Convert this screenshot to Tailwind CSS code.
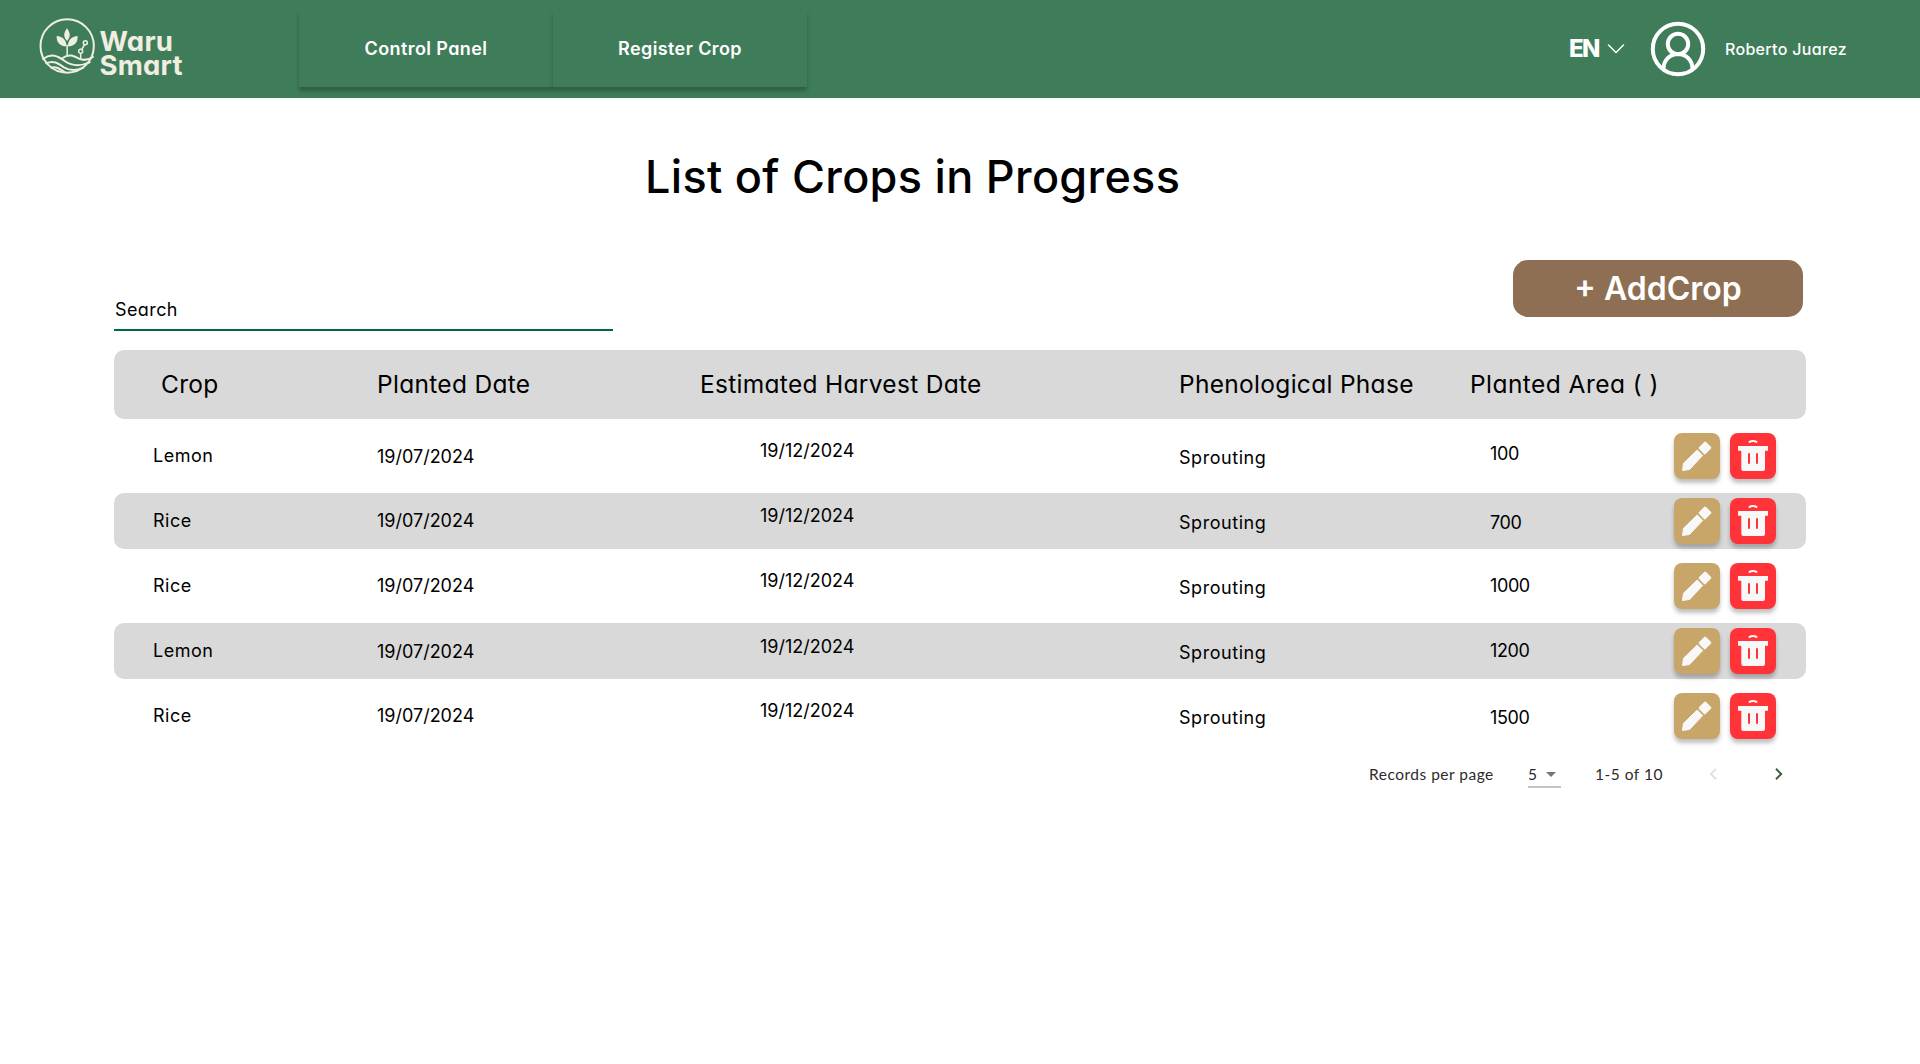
<!DOCTYPE html>
<html lang="en">
<head>
<meta charset="utf-8">
<title>Waru Smart</title>
<script src="https://cdn.jsdelivr.net/npm/@tailwindcss/browser@4"></script>
</head>
<body class="min-h-screen overflow-hidden bg-white font-['Inter',sans-serif] text-black [font-feature-settings:'cv11']">

<header class="flex h-[98px] items-start bg-[#3F7D5A] text-white">
  <a class="flex w-[299px] items-start pt-[18px] pl-[38.5px] text-[#EFEEE0]">
    <svg class="size-14 shrink-0" viewBox="55 54 168 168" fill="none" stroke="currentColor" stroke-width="6" stroke-linecap="round">
      <circle cx="139.500" cy="138" r="80"/>
      <g fill="currentColor" stroke="none">
        <path d="M139 85C127 101 129 112 139 123C149 112 151 101 139 85Z"/>
        <path d="M108 108C107 128 119 139 137 139C138 121 126 109 108 108Z"/>
        <path d="M171 108C172 128 160 139 142 139C141 121 153 109 171 108Z"/>
      </g>
      <path d="M139.500 136V166" stroke-width="4.500"/>
      <g stroke-width="4.500"><circle cx="194" cy="128" r="6"/><circle cx="180" cy="154" r="6"/><path d="M191 135L184 147M180 161V173"/></g>
      <path d="M67 177C92 158 112 168 132 183C155 199 180 199 207 187"/>
      <path d="M126 174C145 160 160 168 175 176C190 183 203 180 217 171"/>
      <path d="M77 190C98 180 112 189 130 202C148 213 168 212 188 203"/>
      <path d="M92 203C105 198 116 206 132 216"/>
    </svg>
    <span class="ml-[5px] flex flex-col pt-[11px] text-[27.5px] leading-6 font-bold tracking-[0.2px]"><span>Waru</span><span>Smart</span></span>
  </a>
  <nav class="flex pt-2.5 text-lg font-semibold tracking-[0.4px]">
    <a class="flex h-[77px] w-[254px] items-center justify-center bg-[#3F7D5A] shadow-[0_4px_4px_rgba(0,0,0,0.25)]">Control Panel</a>
    <a class="flex h-[77px] w-[254px] items-center justify-center bg-[#3F7D5A] shadow-[0_4px_4px_rgba(0,0,0,0.25)]">Register Crop</a>
  </nav>
  <div class="ml-auto flex h-[98px] items-center pr-[73px]">
    <span class="text-2xl font-extrabold tracking-[-1.5px]">EN</span>
    <svg class="ml-[8px] h-[10px] w-[18px]" viewBox="0 0 18 10" fill="none" stroke="currentColor" stroke-width="1.500" stroke-linecap="round" stroke-linejoin="round"><path d="M1.500 1L9 8.500L16.500 1"/></svg>
    <svg class="ml-[25px] size-14" viewBox="-28 -28 56 56" fill="none" stroke="currentColor" stroke-width="4"><circle r="25.200"/><circle cy="-5" r="10.200"/><path d="M-14.500 20C-14.500 11 -8 5 0 5S14.500 11 14.500 20"/></svg>
    <span class="ml-[19px] font-medium tracking-[0.33px]">Roberto Juarez</span>
  </div>
</header>

<main class="px-[114px]">
  <h1 class="pt-[47px] pl-[531px] text-[45px] leading-[64px] font-medium tracking-[0.3px] whitespace-nowrap">List of Crops in Progress</h1>

  <div class="flex h-[141px] items-start justify-between pt-[51px] pr-[3px]">
    <label class="mt-[38px] flex h-[33px] w-[499px] items-start border-b-2 border-[#006747] pl-px text-lg leading-6 tracking-[0.4px]">Search</label>
    <button class="h-[57px] w-[290px] rounded-[15px] bg-[#8E6F53] pb-px text-[32px] leading-[55px] font-semibold text-white">+ AddCrop</button>
  </div>

  <div class="grid h-[69px] grid-cols-[216px_323px_479px_291px_1fr] items-center rounded-[10px] bg-[#D9D9D9] pl-[47px] text-[24.5px] tracking-[0.3px] whitespace-nowrap">
    <span>Crop</span><span>Planted Date</span><span>Estimated Harvest Date</span><span>Phenological Phase</span><span class="tracking-[0.45px]">Planted Area ( )</span>
  </div>

  <div id="rows" class="flex flex-col gap-[9px] pt-[9px]"></div>

  <footer class="flex h-14 items-start pt-[20px] pl-[1255px] font-['Lato',sans-serif] text-[15.5px] leading-5 tracking-[0.5px] whitespace-nowrap text-[#2b2b2b]">
    <span class="w-[159px]">Records per page</span>
    <span class="flex h-6 w-[33px] items-start justify-between border-b-2 border-[#C4C4C4] pr-[5px]">5
      <svg class="mt-[8px] h-[5px] w-[10px]" viewBox="0 0 10 5" fill="#757575"><path d="M0 0H10L5 5Z"/></svg>
    </span>
    <span class="ml-[34px] w-[114px]">1-5 of 10</span>
    <svg class="mt-1 h-3 w-2" viewBox="0 0 8 12" fill="none" stroke="#DDE0DA" stroke-width="1.800"><path d="M7 0.800L1.800 6L7 11.200"/></svg>
    <svg class="mt-1 ml-[58px] h-3 w-2" viewBox="0 0 8 12" fill="none" stroke="#3D5F38" stroke-width="2"><path d="M1 0.800L6.200 6L1 11.200"/></svg>
  </footer>
</main>

<script>
  const crops = [
    { name: 'Lemon', area: '100',  padPlanted: 'pt-[17px]', padHarvest: 'pt-[11px]', padArea: 'pt-[14px]' },
    { name: 'Rice',  area: '700',  padPlanted: 'pt-[16px]', padHarvest: 'pt-[11px]', padArea: 'pt-[18px]' },
    { name: 'Rice',  area: '1000', padPlanted: 'pt-[16px]', padHarvest: 'pt-[11px]', padArea: 'pt-[16px]' },
    { name: 'Lemon', area: '1200', padPlanted: 'pt-[17px]', padHarvest: 'pt-[12px]', padArea: 'pt-[16px]' },
    { name: 'Rice',  area: '1500', padPlanted: 'pt-[16px]', padHarvest: 'pt-[11px]', padArea: 'pt-[18px]' },
  ];
  const pencil = '<svg class="size-[46px]" viewBox="0 0 46 46" fill="#F8F8F8" stroke="#F8F8F8" stroke-linejoin="round"><path stroke-width="1" d="M8.500 37.500L9.500 30.300L23.200 17L28.700 22.500L15.500 36.500Z"/><path stroke-width="3" d="M26.200 15L31 10.200L35.800 14.800L30.800 19.800Z"/></svg>';
  const trash = '<svg class="size-[46px]" viewBox="0 0 46 46" fill="#F8F8F8"><path d="M8 13H38V17.700H35V36Q35 38 33 38H13.300Q11.300 38 11.300 36V17.700H8Z"/><path fill="none" stroke="#F8F8F8" stroke-width="2" d="M18.800 9.300Q23 6.700 27.200 9.300"/><path fill="none" stroke="#FF3338" stroke-width="2" d="M19 20.300V30.700M27 20.300V30.700"/></svg>';
  document.getElementById('rows').innerHTML = crops.map((c, i) => `
    <div class="grid h-14 grid-cols-[224px_383px_419px_311px_184px] items-start rounded-[10px] pl-[39px] text-lg leading-6 ${i % 2 ? 'bg-[#D9D9D9]' : ''}">
      <span class="pt-4 tracking-[0.5px]">${c.name}</span>
      <span class="${c.padPlanted}">19/07/2024</span>
      <span class="${c.padHarvest}">19/12/2024</span>
      <span class="pt-[18px] tracking-[0.55px]">Sprouting</span>
      <span class="${c.padArea} tracking-[-0.4px]">${c.area}</span>
      <div class="col-start-6 flex gap-2.5 pt-[5px]">
        <button class="shrink-0 rounded-lg bg-[#C8A669] shadow-[0_4px_4px_rgba(0,0,0,0.25)]">${pencil}</button>
        <button class="shrink-0 rounded-lg bg-[#FF3338] shadow-[0_4px_4px_rgba(0,0,0,0.25)]">${trash}</button>
      </div>
    </div>`).join('');
</script>
</body>
</html>
